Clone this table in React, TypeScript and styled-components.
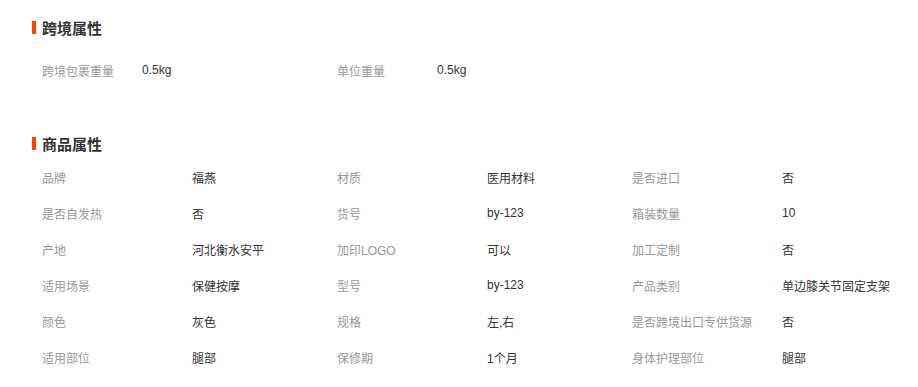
import React from "react";
import styled, { createGlobalStyle } from "styled-components";

const Global = createGlobalStyle`
  html, body { margin: 0; padding: 0; background: #fff; }
  body { font-family: "Liberation Sans", Arial, "Noto Sans CJK SC", sans-serif; }
`;

const Page = styled.div`
  padding: 17px 0 0 32px;
  width: 918px;
  box-sizing: border-box;
`;

const Section = styled.section<{ $gap: number }>`
  margin-top: ${(p) => p.$gap}px;
  &:first-child { margin-top: 0; }
`;

const Title = styled.h3`
  margin: 0;
  display: flex;
  align-items: center;
  gap: 6px;
  height: 20px;
  font-size: 15px;
  font-weight: bold;
  color: #333;
  font-family: "Liberation Sans", Arial, "Noto Sans CJK SC", sans-serif;
  &::before {
    content: "";
    width: 4px;
    height: 13px;
    background: #ff4400;
  }
`;

const Grid = styled.div<{ $top: number }>`
  margin-top: ${(p) => p.$top}px;
  padding-left: 10px;
  display: grid;
  grid-template-columns: repeat(3, 295px);
  grid-auto-rows: 36px;
`;

const Item = styled.div<{ $labelWidth: number }>`
  display: grid;
  grid-template-columns: ${(p) => p.$labelWidth}px 1fr;
  align-items: center;
  font-size: 12px;
  white-space: nowrap;
`;

const Label = styled.span`
  color: #999;
`;

const Value = styled.span`
  color: #333;
`;

const cross = [
  ["跨境包裹重量", "0.5kg"],
  ["单位重量", "0.5kg"],
];

const attrs = [
  ["品牌", "福燕"],
  ["材质", "医用材料"],
  ["是否进口", "否"],
  ["是否自发热", "否"],
  ["货号", "by-123"],
  ["箱装数量", "10"],
  ["产地", "河北衡水安平"],
  ["加印LOGO", "可以"],
  ["加工定制", "否"],
  ["适用场景", "保健按摩"],
  ["型号", "by-123"],
  ["产品类别", "单边膝关节固定支架"],
  ["颜色", "灰色"],
  ["规格", "左,右"],
  ["是否跨境出口专供货源", "否"],
  ["适用部位", "腿部"],
  ["保修期", "1个月"],
  ["身体护理部位", "腿部"],
];

export default function App() {
  return (
    <Page>
      <Global />
      <Section $gap={0}>
        <Title>跨境属性</Title>
        <Grid $top={15}>
          {cross.map(([l, v]) => (
            <Item key={l} $labelWidth={100}>
              <Label>{l}</Label>
              <Value>{v}</Value>
            </Item>
          ))}
        </Grid>
      </Section>
      <Section $gap={45}>
        <Title>商品属性</Title>
        <Grid $top={6}>
          {attrs.map(([l, v]) => (
            <Item key={l} $labelWidth={150}>
              <Label>{l}</Label>
              <Value>{v}</Value>
            </Item>
          ))}
        </Grid>
      </Section>
    </Page>
  );
}
